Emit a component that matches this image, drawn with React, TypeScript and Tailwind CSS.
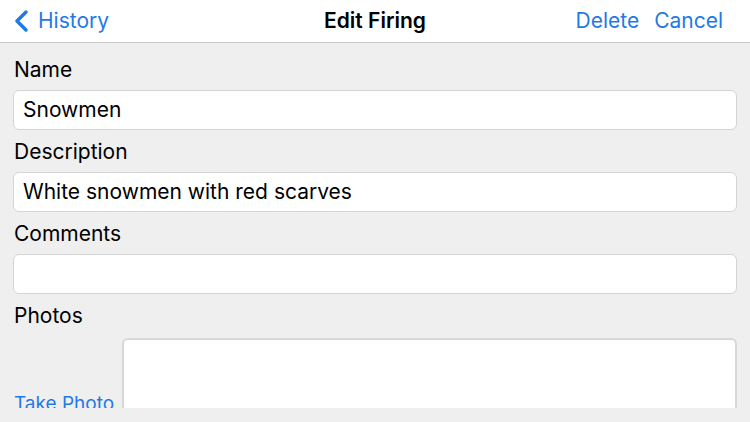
export default function App() {
  const font = { fontFamily: "Inter, 'Noto Sans', sans-serif" };
  return (
    <div className="w-[750px] h-[422px] bg-[#efefef] overflow-hidden text-black" style={font}>
      {/* Nav bar */}
      <div className="h-[43px] bg-white border-b border-[#c8c8c8] flex items-center pl-[13px] relative">
        <div className="flex items-center gap-[9px] text-[#1f7ae8] text-[21px]">
          <svg width="16" height="22" viewBox="0 0 16 22" fill="none">
            <path d="M13 2 L4 11 L13 20" stroke="#1f7ae8" strokeWidth="3.4" strokeLinecap="round" strokeLinejoin="round" />
          </svg>
          <span>History</span>
        </div>
        <div className="absolute left-0 right-0 text-center text-[21px] font-semibold pointer-events-none">Edit Firing</div>
        <div className="ml-auto flex gap-[15px] text-[#1f7ae8] text-[21px] pr-[27px]">
          <span>Delete</span>
          <span>Cancel</span>
        </div>
      </div>

      {/* Form */}
      <div className="h-[365px] overflow-hidden px-[13px] pt-[13px] flex flex-col">
        <div className="shrink-0 text-[21px] leading-[28px] pl-[1px]">Name</div>
        <div className="shrink-0 mt-[6px] h-[40px] bg-white border border-[#d4d4d4] rounded-[6px] flex items-center px-[9px] text-[21px]">Snowmen</div>
        <div className="shrink-0 mt-[8px] text-[21px] leading-[28px] pl-[1px]">Description</div>
        <div className="shrink-0 mt-[6px] h-[40px] bg-white border border-[#d4d4d4] rounded-[6px] flex items-center px-[9px] text-[21px]">White snowmen with red scarves</div>
        <div className="shrink-0 mt-[8px] text-[21px] leading-[28px] pl-[1px]">Comments</div>
        <div className="shrink-0 mt-[6px] h-[40px] bg-white border border-[#d4d4d4] rounded-[6px]"></div>
        <div className="shrink-0 mt-[8px] text-[21px] leading-[28px] pl-[1px]">Photos</div>
        <div className="shrink-0 mt-[8px] flex items-start gap-[8px]">
          <div className="mt-[54px] text-[19px] leading-[24px] text-[#1f7ae8] pl-[1px] whitespace-nowrap">Take Photo</div>
          <div className="flex-1 h-[110px] bg-white border-2 border-[#d8d8d8] rounded-[6px]"></div>
        </div>
      </div>
    </div>
  );
}
